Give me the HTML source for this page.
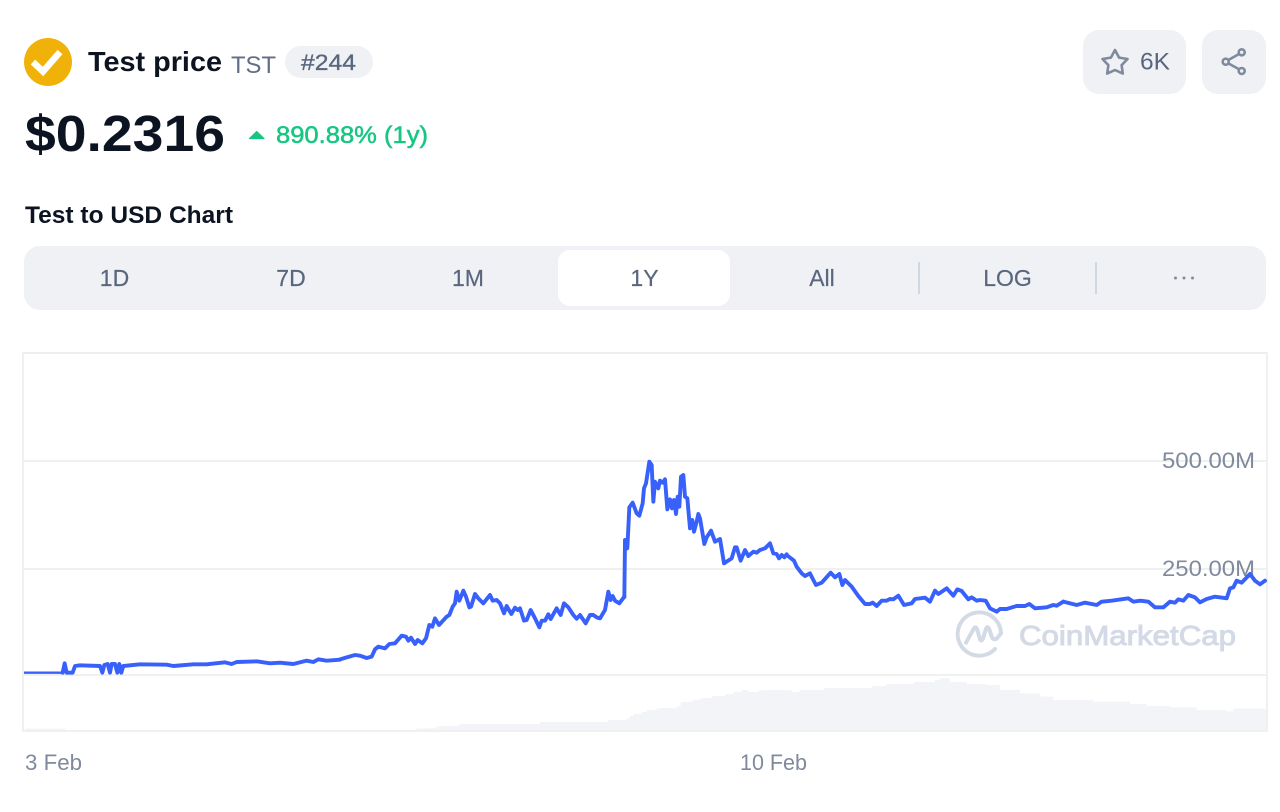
<!DOCTYPE html>
<html>
<head>
<meta charset="utf-8">
<title>Test price</title>
<style>
html,body{margin:0;padding:0;background:#fff;width:1280px;height:812px;overflow:hidden}
svg{display:block}
text{font-family:"Liberation Sans",sans-serif}
.tab{font-size:23px;fill:#58667e;text-anchor:middle;stroke:#58667e;stroke-width:.2}
.ax{font-size:22.5px;fill:#808a9d}
.ln{fill:none;stroke:#3861fb;stroke-width:3.9;stroke-linejoin:round;stroke-linecap:round;vector-effect:non-scaling-stroke}
.vol{fill:#f3f4f7}
</style>
</head>
<body>
<svg width="1280" height="812" viewBox="0 0 1280 812" xmlns="http://www.w3.org/2000/svg">
<rect width="1280" height="812" fill="#fff"/>

<!-- logo -->
<circle cx="48" cy="62" r="24" fill="#f0b208"/>
<path d="M33 62L43 71.500L60 52" fill="none" stroke="#fff" stroke-width="6.5"/>

<text x="88" y="71" font-size="28" font-weight="700" fill="#0d1421" textLength="134" lengthAdjust="spacingAndGlyphs">Test price</text>
<text x="231" y="73" font-size="24" fill="#616e85" textLength="45" lengthAdjust="spacingAndGlyphs">TST</text>
<rect x="285" y="46" width="88" height="32" rx="16" fill="#eff1f5"/>
<text x="301" y="70" font-size="22" fill="#58667e" stroke="#58667e" stroke-width=".3" textLength="55" lengthAdjust="spacingAndGlyphs">#244</text>

<text x="25" y="151" font-size="51" font-weight="700" fill="#0d1421" textLength="200" lengthAdjust="spacingAndGlyphs">$0.2316</text>
<path d="M256.7 131.500L264 138.500H249.500Z" fill="#16c784" stroke="#16c784" stroke-width="1.2" stroke-linejoin="round"/>
<text x="276" y="143" font-size="24" fill="#16c784" stroke="#16c784" stroke-width=".5" textLength="152" lengthAdjust="spacingAndGlyphs">890.88% (1y)</text>

<!-- top right buttons -->
<rect x="1083" y="30" width="103" height="64" rx="16" fill="#eff1f5"/>
<path d="M1115 50L1119.100 57.600L1127.500 59L1121.600 65.200L1122.800 73.600L1115 70L1107.200 73.600L1108.400 65.200L1102.500 59L1110.900 57.600Z" fill="none" stroke="#808a9d" stroke-width="2.6" stroke-linejoin="round"/>
<text x="1140" y="69.500" font-size="24" fill="#58667e" textLength="30" lengthAdjust="spacingAndGlyphs">6K</text>
<rect x="1202" y="30" width="64" height="64" rx="16" fill="#eff1f5"/>
<g fill="none" stroke="#808a9d" stroke-width="2.6">
<circle cx="1241.700" cy="52.300" r="3"/>
<circle cx="1225.700" cy="61.700" r="3"/>
<circle cx="1241.700" cy="71" r="3"/>
<path d="M1239 54L1228.400 60M1228.400 63.400L1239 69.300"/>
</g>

<text x="25" y="223" font-size="24" font-weight="700" fill="#0d1421" textLength="208" lengthAdjust="spacingAndGlyphs">Test to USD Chart</text>

<!-- tabs -->
<rect x="24" y="246" width="1242" height="64" rx="16" fill="#eff1f5"/>
<rect x="558" y="250" width="172" height="56" rx="12" fill="#fff"/>
<text class="tab" x="114.500" y="286">1D</text>
<text class="tab" x="291" y="286">7D</text>
<text class="tab" x="468" y="286">1M</text>
<text class="tab" x="644.500" y="286">1Y</text>
<text class="tab" x="822" y="286">All</text>
<text class="tab" x="1007.500" y="286">LOG</text>
<rect x="918" y="262" width="2" height="32" fill="#cfd6e4"/>
<rect x="1095" y="262" width="2" height="32" fill="#cfd6e4"/>
<circle cx="1175.500" cy="278" r="1.500" fill="#808a9d"/>
<circle cx="1184" cy="278" r="1.500" fill="#808a9d"/>
<circle cx="1192.500" cy="278" r="1.500" fill="#808a9d"/>

<!-- chart frame and grid -->
<rect x="22" y="352" width="1246" height="2" fill="#eeeeee"/>
<rect x="22" y="352" width="2" height="380" fill="#f0f0f0"/>
<rect x="1266" y="352" width="2" height="380" fill="#f0f0f0"/>
<rect x="24" y="460" width="1243" height="2" fill="#f0f0f0"/>
<rect x="24" y="568" width="1243" height="2" fill="#f0f0f0"/>
<rect x="24" y="674" width="1243" height="2" fill="#f0f0f0"/>

<!-- volume -->
<rect class="vol" x="25" y="728.500" width="40" height="3"/>
<path class="vol" transform="translate(400 670) scale(.33333)" d="M50 186V175H110V170H120V168H178V162H420V156H625V150H680V145H690V138H700V132H725V126H740V120H770V116H780V114H830V108H842V96H872V186Z"/>
<path class="vol" transform="translate(690 670) scale(.33333)" d="M-1 186V95H10V90H30V85H45V84H67V78H105V72H130V66H155V60H175V66H205V62H215V60H305V66H328V60H402V54H545V48H588V42H672V36H735V30H755V24H765V30H780V36H830V42H890V48H900V186Z"/>
<path class="vol" transform="translate(940 550) scale(.33333)" d="M-1 545V385H30V396H80V402H140V405H180V420H240V430H300V440H340V450H460V455H570V462H620V468H690V472H770V480H860V484H880V476H975V478H978V545Z"/>
<rect x="22" y="730" width="1246" height="2" fill="#f0f0f0"/>

<!-- watermark -->
<g transform="translate(950 600) scale(.33333)" fill="none" stroke="#d3dae6" stroke-width="12" stroke-linecap="round" stroke-linejoin="round">
<path d="M153 100A65 65 0 1 0 135 147"/>
<path d="M48 128L72 85Q78 78 82 90L90 118Q94 126 99 116L108 86Q113 76 118 88L125 110Q130 122 140 116L153 100"/>
</g>
<text x="1019" y="645" font-size="28" fill="#d3dae6" stroke="#d3dae6" stroke-width="1" textLength="217" lengthAdjust="spacingAndGlyphs">CoinMarketCap</text>

<!-- price line -->
<path d="M24 672.700H62" fill="none" stroke="#3861fb" stroke-width="2.400"/>
<polyline class="ln" transform="translate(60 640) scale(.33333)" points="8,98 14,70 20,98 38,98 45,78 60,76 120,78 127,98 133,75 143,72 150,98 155,72 165,72 172,98 178,72 184,98 190,78 240,73 320,74 340,78 400,73 440,73 495,67 515,72 530,66 590,64 630,70 660,68 700,72 740,62 760,66 775,58 800,62 840,59"/>
<polyline class="ln" transform="translate(340 570) scale(.33333)" points="0,268 20,262 45,255 60,257 80,264 95,260 105,238 115,230 135,235 148,222 165,220 185,197 198,200 205,212 213,203 225,222 233,210 247,220 258,205 268,165 277,170 285,145 297,165 320,140 328,135 338,110 345,100 350,65 358,92 370,62 378,80 388,112 393,110 405,72 415,85 430,100 450,75 458,92 470,90 480,100 492,130 500,108 514,132 525,113 533,120 540,115 552,152 560,150 572,120 585,145 598,172 605,152 615,152 625,133 632,147 650,115 662,135 672,100 685,112 700,135 710,146 720,135 737,160 750,135 760,135 770,142 780,145 795,120 805,65 812,90 818,78 825,92 838,100 853,80"/>
<polyline class="ln" transform="translate(600 450) scale(.33333)" points="73,441 75,270 82,295 88,172 98,158 110,190 118,197 128,160 132,115 138,100 148,35 155,45 160,155 165,95 175,115 180,92 188,98 195,88 202,178 210,148 216,175 222,150 228,192 233,140 238,170 243,80 250,75 255,140 262,145 270,235 277,210 282,245 290,215 295,192 300,205 313,282 320,262 333,242 345,275 360,267 372,340 395,325 405,292 410,292 422,332 435,300 445,318 460,305 470,308 480,300 495,295 510,280 520,310 530,312 537,325 545,315 553,322 560,313"/>
<polyline class="ln" transform="translate(780 530) scale(.33333)" points="20,75 42,92 50,110 65,130 75,138 90,130 100,150 108,165 125,158 152,128 165,142 178,132 187,165 195,150 215,170 235,198 255,222 270,222 278,218 290,228 305,212 320,212 330,207 340,208 355,197 372,225 395,220 405,207 435,203 450,215 465,182 475,192 500,175 520,197 532,178 545,183 565,208 575,202 590,212 600,210 617,212 630,235 650,245 660,237 680,237 710,228 735,228 748,222 765,235 800,232 820,225 830,227 850,215"/>

<!-- axis labels (under end of line) -->
<text class="ax" x="1162" y="468" textLength="93" lengthAdjust="spacingAndGlyphs">500.00M</text>
<text class="ax" x="1162" y="576" textLength="93" lengthAdjust="spacingAndGlyphs">250.00M</text>
<polyline class="ln" transform="translate(940 550) scale(.33333)" points="370,155 410,165 435,158 470,165 485,155 515,152 565,145 580,155 600,152 625,155 645,172 670,172 690,155 705,158 715,148 730,152 745,135 765,142 780,157 800,147 825,140 860,145 870,115 880,112 890,92 905,98 930,72 945,92 960,103 975,92"/>
<text class="ax" x="25" y="770" textLength="57" lengthAdjust="spacingAndGlyphs">3 Feb</text>
<text class="ax" x="740" y="770" textLength="67" lengthAdjust="spacingAndGlyphs">10 Feb</text>
</svg>
</body>
</html>
